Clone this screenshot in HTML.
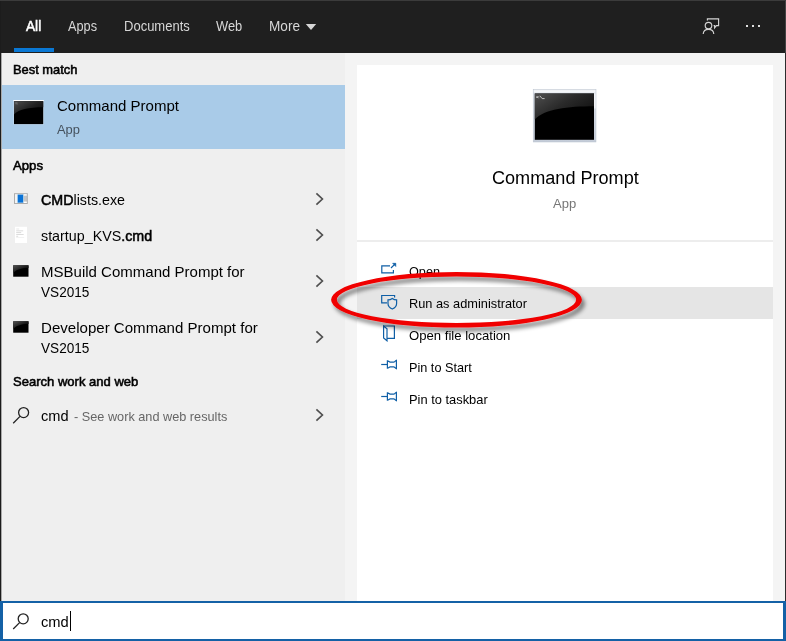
<!DOCTYPE html>
<html><head><meta charset="utf-8"><title>Search</title>
<style>
html,body{margin:0;padding:0;}
body{width:786px;height:641px;position:relative;overflow:hidden;background:#f3f3f3;font-family:"Liberation Sans", sans-serif;}
.t{position:absolute;white-space:pre;line-height:20px;transform-origin:0 50%;display:block;}
.t b{font-weight:400;-webkit-text-stroke:0.55px #000;}
.sb{-webkit-text-stroke:0.55px currentColor;}
.abs{position:absolute;}
</style></head>
<body>
<!-- backgrounds -->
<div class="abs" style="left:0;top:0;width:786px;height:53px;background:#1f1f1f;"></div>
<div class="abs" style="left:0;top:0;width:786px;height:1px;background:#3b3b3b;"></div>
<div class="abs" style="left:1px;top:53px;width:344px;height:548px;background:#efefef;"></div>
<div class="abs" style="left:345px;top:53px;width:441px;height:548px;background:#f4f4f4;"></div>
<div class="abs" style="left:357px;top:65px;width:416px;height:536px;background:#ffffff;"></div>
<div class="abs" style="left:0;top:1px;width:1px;height:600px;background:#1c1c1c;"></div>
<div class="abs" style="left:1px;top:53px;width:1px;height:548px;background:#a9a9a9;"></div>
<div class="abs" style="left:785px;top:1px;width:1px;height:52px;background:#444444;"></div>
<div class="abs" style="left:785px;top:53px;width:1px;height:548px;background:#2c2c2c;"></div>
<!-- All underline -->
<div class="abs" style="left:14px;top:48px;width:40px;height:4px;background:#0a78d4;"></div>
<!-- selected row -->
<div class="abs" style="left:2px;top:85px;width:343px;height:64px;background:#a9cbe8;"></div>
<!-- divider right -->
<div class="abs" style="left:357px;top:240px;width:416px;height:2px;background:#ededed;"></div>
<!-- hover row -->
<div class="abs" style="left:357px;top:287px;width:416px;height:32px;background:#e5e5e5;"></div>
<!-- search box -->
<div class="abs" style="left:0;top:601px;width:780px;height:36px;background:#fff;border:2px solid #1461a6;border-left-width:3px;border-right-width:3px;"></div>
<div class="abs" style="left:70px;top:611px;width:1px;height:20px;background:#000;"></div>

<!-- More caret -->
<svg class="abs" style="left:305px;top:23px" width="12" height="8" viewBox="0 0 12 8"><path d="M0.8 1 L11.2 1 L6 7 Z" fill="#d6d6d6"/></svg>

<!-- feedback icon -->
<svg class="abs" style="left:700px;top:16px" width="22" height="20" viewBox="0 0 22 20" fill="none" stroke="#d4d4d4" stroke-width="1.15">
  <circle cx="8.5" cy="9.6" r="3.3"/>
  <path d="M3.2 18 C3.4 14.8 5.7 13.3 8.5 13.3 C11.3 13.3 13.6 14.8 13.8 18"/>
  <path d="M7.4 4.4 L7.4 2.8 L18.6 2.8 L18.6 9.6 L16.4 9.6 L14.6 11.8 L14.6 9.6 L13.6 9.6"/>
</svg>
<!-- dots -->
<div class="abs" style="left:746px;top:25px;width:2px;height:2px;background:#e0e0e0;"></div>
<div class="abs" style="left:752px;top:25px;width:2px;height:2px;background:#e0e0e0;"></div>
<div class="abs" style="left:758px;top:25px;width:2px;height:2px;background:#e0e0e0;"></div>

<!-- cmd icon (best match) -->
<svg class="abs" style="left:12px;top:98px" width="34" height="29" viewBox="0 0 34 29">
  <defs>
    <linearGradient id="gl1" x1="0" y1="0" x2="1" y2="0.8"><stop offset="0" stop-color="#4e4e4e"/><stop offset="0.55" stop-color="#222"/><stop offset="1" stop-color="#0a0a0a"/></linearGradient>
  </defs>
  <rect x="1.3" y="2" width="30.6" height="24.8" fill="#c9dcee" opacity="0.75"/>
  <rect x="1.4" y="2" width="30.4" height="1.2" fill="#ffffff"/>
  <rect x="2" y="3.2" width="29.2" height="22.9" fill="#000"/>
  <path d="M2 3.2 H31.2 V9.2 C17 9.2 6 11.5 2 16.6 Z" fill="url(#gl1)"/>
  <rect x="3.2" y="4.6" width="2.2" height="0.8" fill="#8a8a8a"/>
  <rect x="3.6" y="5.6" width="2.4" height="0.7" fill="#6a6a6a"/>
</svg>

<!-- big cmd icon -->
<svg class="abs" style="left:532px;top:89px" width="66" height="54" viewBox="0 0 66 54">
  <defs>
    <linearGradient id="gl2" x1="0" y1="0" x2="1" y2="0.7"><stop offset="0" stop-color="#505050"/><stop offset="0.5" stop-color="#2a2a2a"/><stop offset="1" stop-color="#101010"/></linearGradient>
    <linearGradient id="fr2" x1="0" y1="0" x2="0" y2="1"><stop offset="0" stop-color="#dfe4ec"/><stop offset="1" stop-color="#c4ccd8"/></linearGradient>
  </defs>
  <rect x="1.2" y="0.6" width="62.8" height="52.4" fill="url(#fr2)" stroke="#b9c1cd" stroke-width="0.5"/>
  <rect x="1.8" y="1.2" width="61.6" height="2.4" fill="#f4f6f8"/>
  <rect x="2.8" y="4.5" width="59.2" height="46.3" fill="#000"/>
  <rect x="62" y="4.5" width="1.6" height="15" fill="#f2f4f7"/>
  <path d="M2.8 4.5 H62 V17.2 C36 17.2 12 20 2.8 30.6 Z" fill="url(#gl2)"/>
  <path d="M4.4 7.2 h1.4 v1.8 h-1.4 z M6.4 7 h0.8 v0.8 h-0.8z M6.4 8.4 h0.8 v0.8 h-0.8z" fill="#cfcfcf"/>
  <path d="M7.8 6.8 L10.2 9.6 H12.6" stroke="#cfcfcf" stroke-width="0.9" fill="none"/>
</svg>

<!-- exe icon -->
<svg class="abs" style="left:14px;top:192px" width="15" height="13" viewBox="0 0 15 13">
  <rect x="0" y="1.2" width="13.8" height="10.8" fill="#adadad"/>
  <rect x="1" y="2.2" width="11.8" height="8.8" fill="#c6c6c6"/>
  <rect x="1" y="2.2" width="2.8" height="8.8" fill="#f4f4f4"/>
  <rect x="9.4" y="2.2" width="3.4" height="1.4" fill="#ffffff"/>
  <rect x="9.4" y="9.6" width="3.4" height="1.4" fill="#ffffff"/>
  <rect x="3.2" y="2.4" width="6.4" height="8.4" fill="#9ccdf3"/>
  <rect x="3.9" y="2.8" width="5.1" height="7.7" fill="#0a72d6"/>
</svg>

<!-- page icon -->
<svg class="abs" style="left:14px;top:226px" width="14" height="18" viewBox="0 0 14 18">
  <rect x="1" y="0.8" width="12" height="16.2" fill="#ffffff"/>
  <rect x="2.2" y="2.6" width="3" height="0.8" fill="#e2e2e2"/>
  <rect x="2.2" y="4.4" width="7" height="0.9" fill="#d8d8d8"/>
  <rect x="2.2" y="6.2" width="5" height="0.9" fill="#d6d6d6"/>
  <rect x="2.2" y="8" width="7.5" height="0.9" fill="#dadada"/>
  <rect x="2.2" y="9.8" width="2" height="0.9" fill="#d8d8d8"/>
  <rect x="2.2" y="11.2" width="8" height="0.7" fill="#ececec"/>
</svg>

<!-- small cmd icons -->
<svg class="abs" style="left:13px;top:265px" width="16" height="12" viewBox="0 0 16 12">
  <defs><linearGradient id="gl3" x1="0" y1="0" x2="1" y2="1"><stop offset="0" stop-color="#555"/><stop offset="0.6" stop-color="#111"/><stop offset="1" stop-color="#000"/></linearGradient></defs>
  <rect x="0.2" y="0.3" width="15.3" height="11.4" fill="#000"/>
  <path d="M0.2 0.3 H15.5 V3 C8 3 2.5 5 0.2 8 Z" fill="url(#gl3)"/>
</svg>
<svg class="abs" style="left:13px;top:321px" width="16" height="12" viewBox="0 0 16 12">
  <rect x="0.2" y="0.3" width="15.3" height="11.4" fill="#000"/>
  <path d="M0.2 0.3 H15.5 V3 C8 3 2.5 5 0.2 8 Z" fill="url(#gl3)"/>
</svg>

<!-- chevrons -->
<svg class="abs" style="left:314px;top:192px" width="12" height="14" viewBox="0 0 12 14" fill="none" stroke="#505050" stroke-width="1.7"><path d="M2.4 1.4 L8.4 7 L2.4 12.6"/></svg>
<svg class="abs" style="left:314px;top:228px" width="12" height="14" viewBox="0 0 12 14" fill="none" stroke="#505050" stroke-width="1.7"><path d="M2.4 1.4 L8.4 7 L2.4 12.6"/></svg>
<svg class="abs" style="left:314px;top:274px" width="12" height="14" viewBox="0 0 12 14" fill="none" stroke="#505050" stroke-width="1.7"><path d="M2.4 1.4 L8.4 7 L2.4 12.6"/></svg>
<svg class="abs" style="left:314px;top:330px" width="12" height="14" viewBox="0 0 12 14" fill="none" stroke="#505050" stroke-width="1.7"><path d="M2.4 1.4 L8.4 7 L2.4 12.6"/></svg>
<svg class="abs" style="left:314px;top:407.7px" width="12" height="14" viewBox="0 0 12 14" fill="none" stroke="#505050" stroke-width="1.7"><path d="M2.4 1.4 L8.4 7 L2.4 12.6"/></svg>

<!-- magnifiers -->
<svg class="abs" style="left:11px;top:405px" width="20" height="20" viewBox="0 0 20 20" fill="none" stroke="#222" stroke-width="1.3"><circle cx="12.6" cy="7.6" r="5"/><path d="M9 11.4 L2.2 18.2"/></svg>
<svg class="abs" style="left:11px;top:611px" width="20" height="20" viewBox="0 0 20 20" fill="none" stroke="#222" stroke-width="1.3"><circle cx="12.2" cy="7.8" r="5"/><path d="M8.6 11.6 L2.2 18"/></svg>

<!-- action icons -->
<svg class="abs" style="left:379px;top:261px" width="20" height="16" viewBox="0 0 20 16" fill="none" stroke="#0f5fa6" stroke-width="1.2">
  <path d="M11 4.9 H2.8 V11.8 H14.4 V9"/>
  <path d="M12 7 L16.4 2.6"/>
  <path d="M13.6 2.3 H16.8 V5.5 Z" fill="#0f5fa6" stroke-width="0.6"/>
</svg>
<svg class="abs" style="left:379px;top:293px" width="20" height="18" viewBox="0 0 20 18" fill="none" stroke="#0f5fa6" stroke-width="1.2">
  <path d="M15.6 4.6 V2.5 H2.7 V9.9 H8"/>
  <path d="M13.3 5.4 C12 6.4 10.6 6.9 9 6.9 V10.4 C9 12.9 10.8 14.9 13.3 16 C15.8 14.9 17.6 12.9 17.6 10.4 V6.9 C16 6.9 14.6 6.4 13.3 5.4 Z"/>
</svg>
<svg class="abs" style="left:381px;top:324px" width="16" height="18" viewBox="0 0 16 18" fill="none" stroke="#0f5fa6" stroke-width="1.2">
  <path d="M2.6 2 H13.4 V14.4 H6"/>
  <path d="M2.6 2 V14 L6 16.8 V4.8 Z"/>
</svg>
<svg class="abs" style="left:380px;top:359px" width="18" height="11" viewBox="0 0 18 11" fill="none" stroke="#0f5fa6" stroke-width="1.2">
  <path d="M1.2 5.5 H7.4"/>
  <path d="M7.4 1.2 V9.8 M7.4 1.8 C8.8 1.8 9 3.1 10.2 3.1 H13.6 C14.8 3.1 15 1.8 16.4 1.4 V9.6 C15 9.2 14.8 7.9 13.6 7.9 H10.2 C9 7.9 8.8 9.2 7.4 9.2"/>
</svg>
<svg class="abs" style="left:380px;top:391px" width="18" height="11" viewBox="0 0 18 11" fill="none" stroke="#0f5fa6" stroke-width="1.2">
  <path d="M1.2 5.5 H7.4"/>
  <path d="M7.4 1.2 V9.8 M7.4 1.8 C8.8 1.8 9 3.1 10.2 3.1 H13.6 C14.8 3.1 15 1.8 16.4 1.4 V9.6 C15 9.2 14.8 7.9 13.6 7.9 H10.2 C9 7.9 8.8 9.2 7.4 9.2"/>
</svg>


<span class='t sb' style='left:26px;top:15.80px;font-size:15px;color:#ffffff;transform:scaleX(0.9117);'>All</span>
<span class='t' style='left:68px;top:16.15px;font-size:14px;color:#d6d6d6;transform:scaleX(0.9085);'>Apps</span>
<span class='t' style='left:123.7px;top:16.15px;font-size:14px;color:#d6d6d6;transform:scaleX(0.9292);'>Documents</span>
<span class='t' style='left:216px;top:16.15px;font-size:14px;color:#d6d6d6;transform:scaleX(0.9213);'>Web</span>
<span class='t' style='left:269px;top:16.15px;font-size:14px;color:#d6d6d6;transform:scaleX(0.9716);'>More</span>
<span class='t sb' style='left:13.2px;top:59.80px;font-size:13px;color:#000;transform:scaleX(0.9903);'>Best match</span>
<span class='t' style='left:57px;top:95.80px;font-size:15px;color:#000;transform:scaleX(1.0023);'>Command Prompt</span>
<span class='t' style='left:57px;top:119.50px;font-size:13px;color:#46525e;transform:scaleX(0.9939);'>App</span>
<span class='t sb' style='left:13.2px;top:156.30px;font-size:13px;color:#000;transform:scaleX(1.0121);'>Apps</span>
<span class='t' style='left:41.2px;top:189.50px;font-size:15px;color:#000;transform:scaleX(0.9507);'><b>CMD</b>lists.exe</span>
<span class='t' style='left:41.2px;top:225.80px;font-size:15px;color:#000;transform:scaleX(0.9526);'>startup_KVS<b>.cmd</b></span>
<span class='t' style='left:41.2px;top:261.50px;font-size:15px;color:#000;transform:scaleX(1.0010);'>MSBuild Command Prompt for</span>
<span class='t' style='left:41.2px;top:281.70px;font-size:15px;color:#000;transform:scaleX(0.9065);'>VS2015</span>
<span class='t' style='left:41.2px;top:318.00px;font-size:15px;color:#000;transform:scaleX(1.0041);'>Developer Command Prompt for</span>
<span class='t' style='left:41.2px;top:338.00px;font-size:15px;color:#000;transform:scaleX(0.9065);'>VS2015</span>
<span class='t sb' style='left:13.2px;top:371.50px;font-size:13px;color:#000;transform:scaleX(1.0023);'>Search work and web</span>
<span class='t' style='left:41.0px;top:406.10px;font-size:15px;color:#000;transform:scaleX(0.9738);'>cmd</span>
<span class='t' style='left:74.2px;top:406.80px;font-size:13px;color:#666;transform:scaleX(0.9777);'>- See work and web results</span>
<span class='t' style='left:40.8px;top:612.00px;font-size:15px;color:#000;transform:scaleX(0.9808);'>cmd</span>
<span class='t' style='left:491.7px;top:167.56px;font-size:18px;color:#000;transform:scaleX(1.0050);'>Command Prompt</span>
<span class='t' style='left:553.3px;top:194.00px;font-size:13px;color:#767676;transform:scaleX(1.0026);'>App</span>
<span class='t' style='left:409.2px;top:261.80px;font-size:13px;color:#000;transform:scaleX(0.9745);'>Open</span>
<span class='t' style='left:409.2px;top:293.70px;font-size:13px;color:#000;transform:scaleX(0.9837);'>Run as administrator</span>
<span class='t' style='left:409.2px;top:325.60px;font-size:13px;color:#000;transform:scaleX(1.0094);'>Open file location</span>
<span class='t' style='left:409.2px;top:357.50px;font-size:13px;color:#000;transform:scaleX(0.9765);'>Pin to Start</span>
<span class='t' style='left:409.2px;top:389.50px;font-size:13px;color:#000;transform:scaleX(0.9899);'>Pin to taskbar</span>
<!-- red ellipse -->
<svg class="abs" style="left:315px;top:255px" width="290" height="95" viewBox="315 255 290 95">
  <defs><filter id="sh" x="-10%" y="-30%" width="120%" height="160%"><feGaussianBlur in="SourceAlpha" stdDeviation="2.2"/><feOffset dx="3" dy="3.5" result="o"/><feComponentTransfer><feFuncA type="linear" slope="0.5"/></feComponentTransfer><feMerge><feMergeNode/><feMergeNode in="SourceGraphic"/></feMerge></filter></defs>
  <path d="M331.1 299.8 A125.4 27.8 0 1 0 581.9 299.8 A125.4 27.8 0 1 0 331.1 299.8 Z M336.9 299.8 A119.6 23.2 0 1 0 576.1 299.8 A119.6 23.2 0 1 0 336.9 299.8 Z" fill="#f00000" fill-rule="evenodd" filter="url(#sh)"/>
</svg>

</body></html>
